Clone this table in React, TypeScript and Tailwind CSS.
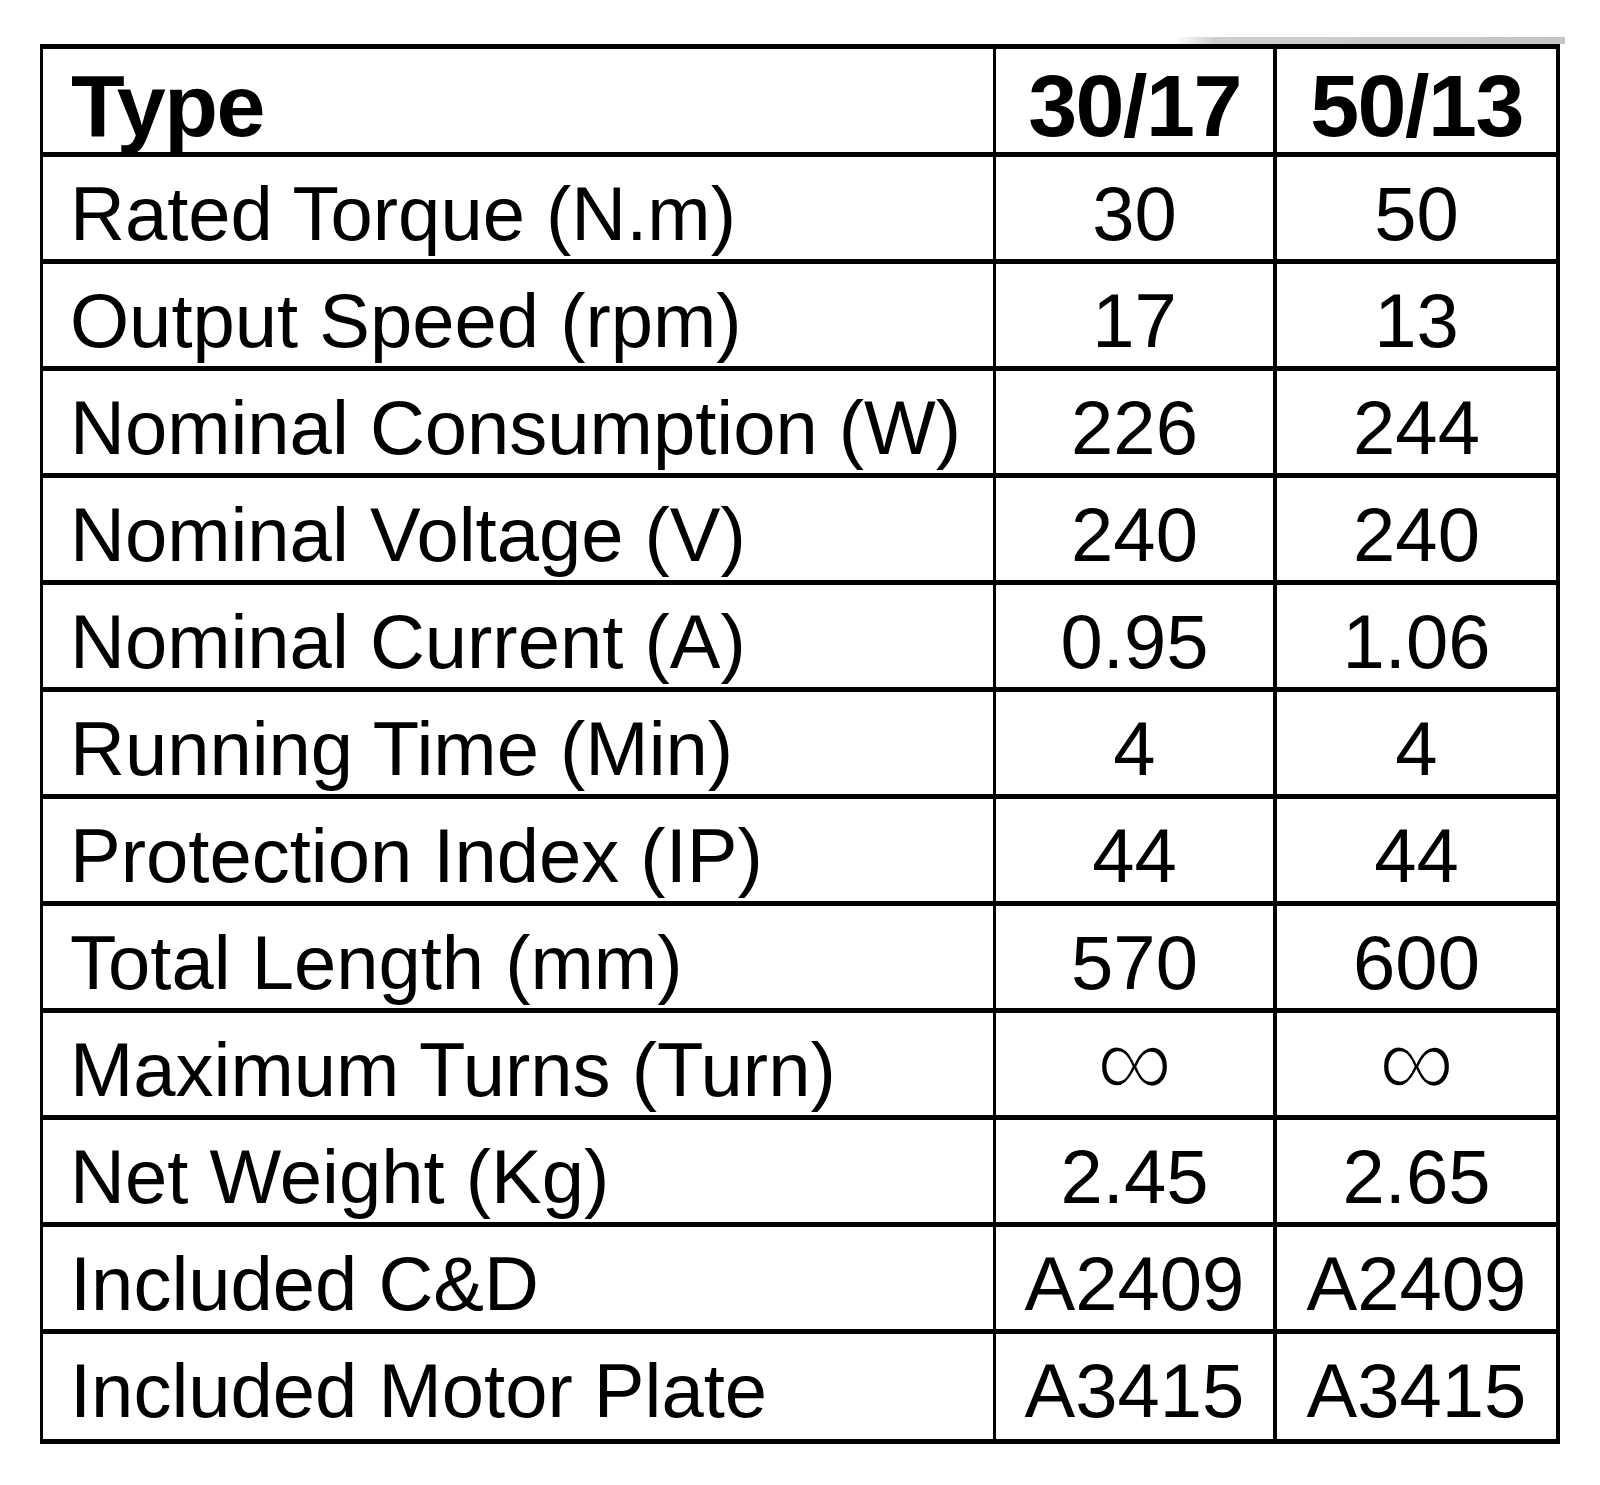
import React from "react";

const rows: [string, string, string][] = [
  ["Rated Torque (N.m)", "30", "50"],
  ["Output Speed (rpm)", "17", "13"],
  ["Nominal Consumption (W)", "226", "244"],
  ["Nominal Voltage (V)", "240", "240"],
  ["Nominal Current (A)", "0.95", "1.06"],
  ["Running Time (Min)", "4", "4"],
  ["Protection Index (IP)", "44", "44"],
  ["Total Length (mm)", "570", "600"],
  ["Maximum Turns (Turn)", "∞", "∞"],
  ["Net Weight (Kg)", "2.45", "2.65"],
  ["Included C&D", "A2409", "A2409"],
  ["Included Motor Plate", "A3415", "A3415"],
];

function Val({ v }: { v: string }) {
  if (v === "∞") {
    return (
      <span className="inline-block -translate-y-[9px] text-[108px] leading-[76px] [-webkit-text-stroke:3px_white]">∞</span>
    );
  }
  return <>{v}</>;
}

export default function App() {
  return (
    <div className="min-h-[1485px] w-[1600px] bg-white pt-[37px] pl-[40px] font-['Liberation_Sans',Arial,sans-serif] text-black">
      <div className="ml-[1135px] h-[7px] w-[390px] bg-linear-to-r from-white from-0% via-[#cfcfcf] via-10% to-[#c4c4c4]" />
      <div className="w-[1520px] border-t-[5px] border-l-[3px] border-r-[4px] border-black">
        <div className="grid h-[108px] grid-cols-[950px_280px_283px] border-b-[5px] border-black">
          <div className="pl-[28px] pt-[13px] text-[88px] font-bold leading-none tracking-[-1.5px]">Type</div>
          <div className="border-l-[3px] border-black pt-[13px] text-center text-[88px] font-bold leading-none tracking-[-1.5px]">30/17</div>
          <div className="border-l-[4px] border-black pt-[13px] text-center text-[88px] font-bold leading-none tracking-[-1.5px]">50/13</div>
        </div>
        {rows.map(([label, a, b], i) => (
          <div
            key={label}
            className={`grid grid-cols-[950px_280px_283px] border-b-[5px] border-black ${i === rows.length - 1 ? "h-[110px]" : "h-[107px]"}`}
          >
            <div className="pl-[27px] pt-[19px] text-[76px] leading-none">{label}</div>
            <div className="border-l-[3px] border-black pt-[19px] text-center text-[76px] leading-none">
              <Val v={a} />
            </div>
            <div className="border-l-[4px] border-black pt-[19px] text-center text-[76px] leading-none">
              <Val v={b} />
            </div>
          </div>
        ))}
      </div>
    </div>
  );
}
